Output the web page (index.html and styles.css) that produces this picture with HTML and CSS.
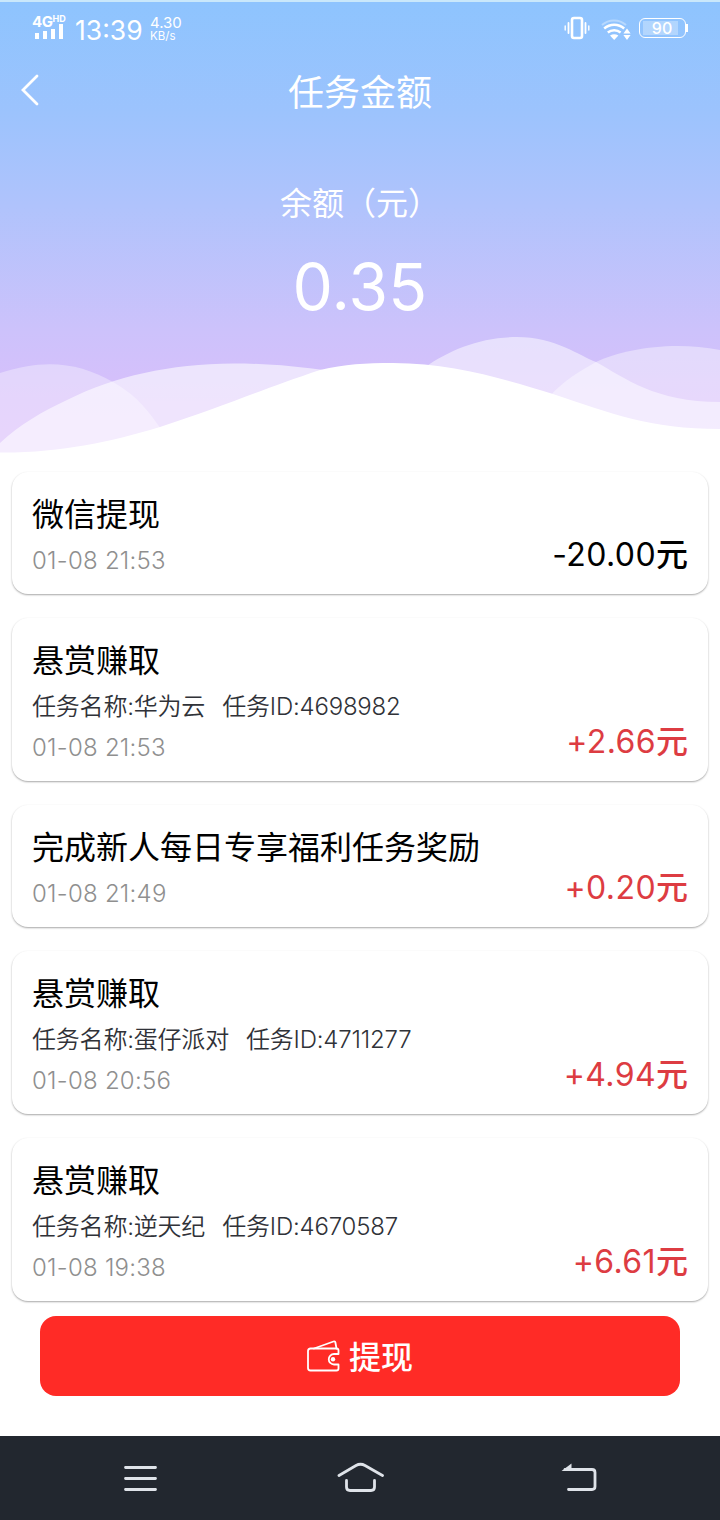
FILE: index.html
```
<!DOCTYPE html>
<html lang="zh-CN">
<head>
    <meta charset="UTF-8">
    <meta name="viewport" content="width=device-width, initial-scale=1.0">
    <title>任务金额</title>
    <link rel="stylesheet" href="styles.css">
</head>
<body>
    <header class="header">
        <div class="status-bar">
            <div class="signal">
                <div class="network">4G<sup>HD</sup></div>
                <svg width="30" height="15" viewBox="0 0 30 15" fill="#fff">
                    <rect x="1" y="9" width="4" height="6"/>
                    <rect x="9" y="7" width="4" height="8"/>
                    <rect x="17" y="5" width="4" height="10"/>
                    <rect x="25" y="0" width="4" height="15"/>
                </svg>
            </div>
            <div class="time">13:39</div>
            <div class="speed"><span>4.30</span><span class="unit">KB/s</span></div>
            <div class="status-icons">
                <svg class="vibrate" width="26" height="24" viewBox="0 0 26 24" fill="none" stroke="#fff" stroke-linecap="round">
                    <rect x="8" y="2" width="10" height="20" rx="2" stroke-width="2.6"/>
                    <path d="M4.5 7v10M21.5 7v10" stroke-width="1.8"/>
                    <path d="M1.2 10v4M24.8 10v4" stroke-width="1.4"/>
                </svg>
                <svg class="wifi" width="30" height="22" viewBox="0 0 30 22" fill="none" stroke="#fff">
                    <path d="M1 6a18 18 0 0 1 24 0" stroke-width="2" opacity=".35"/>
                    <path d="M3.2 9.5a15 15 0 0 1 20 0" stroke-width="2.4"/>
                    <path d="M6.8 13.5a10 10 0 0 1 12.8 0" stroke-width="2.4"/>
                    <path d="M9 16.5q4.2-2.5 8.4 0l-4.2 4.5z" fill="#fff" stroke="none"/>
                    <path d="M26 9.5l3.6 5h-7.2zM26 21l3.6-5h-7.2z" fill="#fff" stroke="none"/>
                </svg>
                <div class="battery"><span>90</span></div>
            </div>
        </div>
        <div class="nav">
            <svg class="back" width="20" height="34" viewBox="0 0 20 34" fill="none" stroke="#fff" stroke-width="2.8" stroke-linecap="round">
                <path d="M17 3L3 17L17 31"/>
            </svg>
            <h1>任务金额</h1>
        </div>
        <div class="balance">
            <div class="balance-label">余额（元）</div>
            <div class="balance-value">0.35</div>
        </div>
        <svg class="waves" width="720" height="130" viewBox="0 0 720 130" fill="#fff">
            <path opacity=".35" d="M0 47C45 32 80 37 113 56C135 69 145 80 163 106L120 130H0Z"/>
            <path opacity=".58" d="M0 117C20 98 42 86 67 74C115 50 170 38 233 37.5C265 37.5 295 40 330 45V130H0Z"/>
            <path opacity=".5" d="M425 41C450 24 480 11 517 11C555 11 580 30 596 36C625 52 655 76 720 76V130H425Z"/>
            <path opacity=".4" d="M550 70C563 55 580 45 596 36C625 22 675 15 720 24V130H550Z"/>
            <path d="M0 126.5C60 127 110 116 160 101C225 80 260 64 320 44C345 38 365 37 393 37C455 37 510 55 553 68C610 87 650 103 720 103V130H0Z"/>
        </svg>
    </header>

    <main class="list">
        <div class="card">
            <div class="info">
                <h2>微信提现</h2>
                <div class="date">01-08 21:53</div>
            </div>
            <div class="amount">-20.00<b>元</b></div>
        </div>
        <div class="card">
            <div class="info">
                <h2>悬赏赚取</h2>
                <div class="task"><span>任务名称:华为云</span><span>任务ID:4698982</span></div>
                <div class="date">01-08 21:53</div>
            </div>
            <div class="amount income">+2.66<b>元</b></div>
        </div>
        <div class="card">
            <div class="info">
                <h2>完成新人每日专享福利任务奖励</h2>
                <div class="date">01-08 21:49</div>
            </div>
            <div class="amount income">+0.20<b>元</b></div>
        </div>
        <div class="card">
            <div class="info">
                <h2>悬赏赚取</h2>
                <div class="task"><span>任务名称:蛋仔派对</span><span>任务ID:4711277</span></div>
                <div class="date">01-08 20:56</div>
            </div>
            <div class="amount income">+4.94<b>元</b></div>
        </div>
        <div class="card">
            <div class="info">
                <h2>悬赏赚取</h2>
                <div class="task"><span>任务名称:逆天纪</span><span>任务ID:4670587</span></div>
                <div class="date">01-08 19:38</div>
            </div>
            <div class="amount income">+6.61<b>元</b></div>
        </div>
    </main>

    <button class="withdraw-btn">
        <svg width="34" height="32" viewBox="0 0 34 32" fill="none" stroke="#fff" stroke-width="1.8" stroke-linejoin="round" stroke-linecap="round">
            <path d="M31.5 14V10.5Q31.5 8.5 29.5 8.5H3.5Q1 8.5 1 11V28Q1 30.5 3.5 30.5H29.5Q31.5 30.5 31.5 28.5V24.5H27A5.2 5.2 0 0 1 27 14Z"/>
            <path d="M7 8.5L26.5 1.5Q28 1 28.4 2.5L29.5 8.5"/>
            <circle cx="26" cy="19.3" r="2.2" fill="#fff" stroke="none"/>
        </svg>
        <span>提现</span>
    </button>

    <footer class="system-nav">
        <svg width="48" height="34" viewBox="0 0 48 34">
            <path d="M9.500 6.500h30M9.500 17.500h30M9.500 28.500h30"/>
        </svg>
        <svg width="48" height="34" viewBox="0 0 48 34">
            <path d="M3 14.500L20 4.500Q24.500 2 29 4.500L46.500 14.500M10.500 19.500V26Q10.500 29.500 14 29.500H35Q38.500 29.500 38.500 26V19.500"/>
        </svg>
        <svg width="48" height="34" viewBox="0 0 48 34">
            <path d="M9 8.500H36Q39 8.500 39 11.500V25.500Q39 28.500 36 28.500H12.500"/>
            <path class="arrow" d="M5.500 10L15.500 2.500V10Z"/>
        </svg>
    </footer>
</body>
</html>
```
FILE: styles.css
```
* {
    box-sizing: border-box;
    margin: 0;
    padding: 0;
}

body {
    width: 720px;
    height: 1520px;
    display: flex;
    flex-direction: column;
    background-color: #fff;
    font-family: Inter, 'Noto Sans CJK SC', sans-serif;
    overflow: hidden;
}

svg {
    display: block;
    flex-shrink: 0;
}

.header {
    height: 456px;
    flex-shrink: 0;
    border-top: 2px solid #c9e8fb;
    background: linear-gradient(#8ec4fe 0, #9cc3fd 110px, #afc3fc 200px, #cdc2fb 330px, #d8bffb 400px, #dcbffb 456px);
    color: #fff;
}

.status-bar {
    display: flex;
    height: 54px;
    padding: 11px 32px 0 32px;
}

.signal {
    width: 36px;
}

.network {
    display: flex;
    height: 15px;
    font-size: 15px;
    font-weight: 700;
    line-height: 17px;
    letter-spacing: -0.5px;
}

.network sup {
    font-size: 9px;
    line-height: 12px;
    letter-spacing: 0;
}

.signal svg {
    margin-left: 2px;
    margin-top: -4px;
}

.time {
    width: 74px;
    margin-left: 7px;
    font-size: 26.5px;
    line-height: 34px;
}

.speed {
    display: flex;
    flex-direction: column;
    padding-top: 2px;
    margin-left: 1px;
    font-size: 15px;
    line-height: 15px;
}

.speed .unit {
    font-size: 11.5px;
    line-height: 12px;
}

.status-icons {
    display: flex;
    align-items: flex-start;
    margin-left: auto;
    padding-top: 3px;
}

.wifi {
    margin: 3px 8px 0 11px;
}

.battery {
    position: relative;
    width: 47px;
    height: 20px;
    margin-top: 2px;
    margin-right: 2px;
    padding: 2px 3px;
    border: 1px solid #fff;
    border-radius: 6px;
}

.battery::after {
    content: '';
    position: absolute;
    right: -3px;
    top: 5px;
    width: 2px;
    height: 8px;
    background-color: #fff;
}

.battery span {
    display: block;
    width: 35px;
    height: 14px;
    padding-left: 3px;
    background-color: rgba(255, 255, 255, 0.3);
    font-size: 16px;
    font-weight: 500;
    line-height: 14px;
    text-align: center;
}

.nav {
    display: grid;
    grid-template-columns: 20px 1fr 20px;
    align-items: center;
    height: 67px;
    padding: 0 20px;
}

.nav h1 {
    text-align: center;
    font-size: 36px;
    font-weight: 400;
}

.balance {
    height: 203px;
    padding-top: 56px;
    text-align: center;
}

.balance-label {
    font-size: 32px;
    line-height: 50px;
}

.balance-value {
    margin-top: 18px;
    font-size: 64px;
    line-height: 80px;
    letter-spacing: 0.3px;
}

.list {
    display: flex;
    flex-direction: column;
    gap: 24px;
    padding: 16px 12px 0;
}

.card {
    display: flex;
    justify-content: space-between;
    align-items: flex-end;
    padding: 20px 20px 16px;
    border-radius: 16px;
    background-color: #fff;
    box-shadow: 0 1px 2px rgba(0, 0, 0, 0.35);
}

.card h2 {
    height: 46px;
    font-size: 32px;
    font-weight: 400;
    line-height: 46px;
    color: #000;
}

.task {
    display: flex;
    gap: 17px;
    height: 41px;
    font-size: 24px;
    font-weight: 350;
    line-height: 45px;
    letter-spacing: -0.2px;
    color: #303238;
}

.date {
    height: 40px;
    font-size: 24px;
    font-weight: 300;
    line-height: 45px;
    letter-spacing: 0.25px;
    color: #8f8f8f;
}

.amount {
    height: 47px;
    font-size: 32px;
    line-height: 47px;
    letter-spacing: 0.4px;
    color: #000;
}

.amount b {
    font-weight: 500;
    letter-spacing: 0;
}

.income {
    color: #dd3c42;
}

.withdraw-btn {
    display: flex;
    flex-shrink: 0;
    justify-content: center;
    align-items: center;
    gap: 8px;
    height: 80px;
    margin: 15px 40px 0;
    border: none;
    border-radius: 16px;
    background-color: #ff2b26;
    color: #fff;
    font-family: inherit;
    font-size: 32px;
    font-weight: 500;
}

.withdraw-btn span {
    margin-top: -2px;
}

.system-nav {
    display: flex;
    flex-shrink: 0;
    justify-content: space-between;
    height: 84px;
    margin-top: auto;
    padding: 25px 116px 0;
    background-color: #22272f;
}

.system-nav svg {
    fill: none;
    stroke: #dfe3e9;
    stroke-width: 2.8;
    stroke-linecap: round;
}

.system-nav .arrow {
    fill: #dfe3e9;
    stroke: none;
}
```
